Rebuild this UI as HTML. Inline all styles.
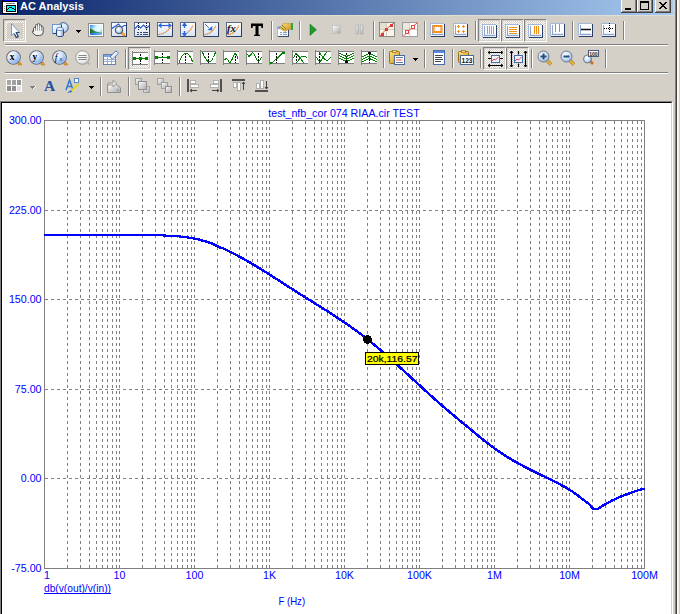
<!DOCTYPE html><html><head><meta charset="utf-8"><style>
*{margin:0;padding:0;box-sizing:border-box}
html,body{width:680px;height:614px;overflow:hidden;background:#d4d0c8;font-family:"Liberation Sans",sans-serif;position:relative}
.a{position:absolute}
.pb{position:absolute;width:23px;height:23px;border-top:1px solid #808080;border-left:1px solid #808080;border-right:1px solid #fff;border-bottom:1px solid #fff;background:#d4d0c8}
.dz{position:absolute;width:19px;height:19px;background:repeating-conic-gradient(#fff 0 25%,#d4d0c8 0 50%) 0 0/2px 2px}
.vs{position:absolute;width:2px;height:19px;border-left:1px solid #808080;border-right:1px solid #fff}
.hs{position:absolute;left:5px;width:663px;height:2px;border-top:1px solid #808080;border-bottom:1px solid #fff}
svg{position:absolute;overflow:visible}
</style></head><body><div class="a" style="left:0;top:0;width:673px;height:15px;background:linear-gradient(to right,#0a246a,#a6caf0)"></div>
<div class="a" style="left:0;top:15px;width:673px;height:1px;background:#e2ded4"></div>
<svg style="left:2px;top:0" width="16" height="14" viewBox="0 0 16 14" shape-rendering="crispEdges">
<rect x="0" y="0" width="16" height="14" fill="#000"/>
<rect x="1" y="0" width="14" height="1" fill="#0000ff"/>
<rect x="1" y="2" width="14" height="11" fill="#fff"/>
<rect x="4" y="3" width="9" height="1" fill="#808080"/>
<rect x="2" y="6" width="1" height="1" fill="#909090"/><rect x="2" y="8" width="1" height="1" fill="#909090"/><rect x="2" y="10" width="1" height="1" fill="#909090"/>
<rect x="4" y="5" width="10" height="7" fill="#000"/>
<rect x="5" y="6" width="8" height="5" fill="#00ffff"/>
<path d="M7 7h3v1h-3zM6 8h1v1h-1zM10 8h2v1h-2zM5 9h1v1h-1zM12 9h1v1h-1z" fill="#000"/>
</svg>
<div class="a" style="left:20px;top:-1px;font:bold 11px 'Liberation Sans',sans-serif;color:#fff;line-height:14px;white-space:nowrap">AC Analysis</div>
<svg style="left:621px;top:-2px" width="16" height="15" viewBox="0 0 16 15" shape-rendering="crispEdges">
<rect x="0" y="0" width="16" height="15" fill="#404040"/>
<rect x="0" y="0" width="15" height="14" fill="#fff"/>
<rect x="1" y="1" width="14" height="13" fill="#808080"/>
<rect x="1" y="1" width="13" height="12" fill="#d4d0c8"/>
<rect x="4" y="10" width="6" height="2" fill="#000"/></svg>
<svg style="left:637px;top:-2px" width="16" height="15" viewBox="0 0 16 15" shape-rendering="crispEdges">
<rect x="0" y="0" width="16" height="15" fill="#404040"/>
<rect x="0" y="0" width="15" height="14" fill="#fff"/>
<rect x="1" y="1" width="14" height="13" fill="#808080"/>
<rect x="1" y="1" width="13" height="12" fill="#d4d0c8"/>
<rect x="3" y="3" width="9" height="9" fill="#000"/><rect x="4" y="5" width="7" height="6" fill="#d4d0c8"/></svg>
<svg style="left:655px;top:-2px" width="16" height="15" viewBox="0 0 16 15" shape-rendering="crispEdges">
<rect x="0" y="0" width="16" height="15" fill="#404040"/>
<rect x="0" y="0" width="15" height="14" fill="#fff"/>
<rect x="1" y="1" width="14" height="13" fill="#808080"/>
<rect x="1" y="1" width="13" height="12" fill="#d4d0c8"/>
<path d="M4 4h2v1h1v1h2v-1h1v-1h2v1h-1v1h-1v1h-1v1h1v1h1v1h1v1h-2v-1h-1v-1h-2v1h-1v1h-2v-1h1v-1h1v-1h1v-1h-1v-1h-1v-1h-1z" fill="#000"/></svg>
<div class="a" style="left:673px;top:0;width:1px;height:614px;background:#d4d0c8"></div>
<div class="a" style="left:674px;top:0;width:1px;height:614px;background:#d4d0c8"></div>
<div class="a" style="left:675px;top:0;width:1px;height:614px;background:#808080"></div>
<div class="a" style="left:676px;top:0;width:1px;height:614px;background:#404040"></div>
<div class="a" style="left:677px;top:0;width:1px;height:614px;background:#fff"></div>
<div class="a" style="left:678px;top:0;width:1px;height:614px;background:#f4f2ee"></div>
<div class="a" style="left:679px;top:0;width:1px;height:614px;background:#d4d0c8"></div>
<div class="hs" style="top:44px"></div>
<div class="hs" style="top:72px"></div>
<svg style="left:0;top:0" width="0" height="0"><defs><linearGradient id="gb" x1="0" y1="0" x2="0" y2="1"><stop offset="0" stop-color="#fff"/><stop offset="1" stop-color="#d6e2f4"/></linearGradient><radialGradient id="mg" cx="0.4" cy="0.35" r="0.7"><stop offset="0" stop-color="#ffffff"/><stop offset="0.6" stop-color="#c9dcf6"/><stop offset="1" stop-color="#7ea6e0"/></radialGradient><linearGradient id="sky" x1="0" y1="0" x2="1" y2="0.6"><stop offset="0" stop-color="#2a7ee4"/><stop offset="0.45" stop-color="#d8f6ff"/><stop offset="0.8" stop-color="#e8fcff"/><stop offset="1" stop-color="#8cd8f0"/></linearGradient><linearGradient id="hill" x1="0" y1="0" x2="1" y2="0"><stop offset="0" stop-color="#1f6a2a"/><stop offset="0.6" stop-color="#4a9a70"/><stop offset="1" stop-color="#58b0b0"/></linearGradient><linearGradient id="wat" x1="0" y1="0" x2="1" y2="0"><stop offset="0" stop-color="#1a70d8"/><stop offset="1" stop-color="#6ac0f0"/></linearGradient><linearGradient id="lb" x1="0" y1="0" x2="1" y2="1"><stop offset="0" stop-color="#ffffff"/><stop offset="0.5" stop-color="#dfeafc"/><stop offset="1" stop-color="#a9c4ec"/></linearGradient><linearGradient id="cy" x1="0" y1="0" x2="1" y2="0"><stop offset="0" stop-color="#c8d8f4"/><stop offset="0.4" stop-color="#ffffff"/><stop offset="1" stop-color="#7f9fd0"/></linearGradient><linearGradient id="gr" x1="0" y1="0" x2="1" y2="1"><stop offset="0" stop-color="#ffffff"/><stop offset="1" stop-color="#a8a8a8"/></linearGradient><radialGradient id="cg" cx="0.35" cy="0.3" r="0.75"><stop offset="0" stop-color="#ffffff"/><stop offset="0.45" stop-color="#cfe2fa"/><stop offset="0.85" stop-color="#7eaaf0"/><stop offset="1" stop-color="#3a6ad0"/></radialGradient><radialGradient id="gg" cx="0.35" cy="0.3" r="0.75"><stop offset="0" stop-color="#ffffff"/><stop offset="0.7" stop-color="#ececec"/><stop offset="1" stop-color="#c8c8c8"/></radialGradient><linearGradient id="gold" x1="0" y1="0" x2="1" y2="1"><stop offset="0" stop-color="#ffe68a"/><stop offset="1" stop-color="#c89010"/></linearGradient></defs></svg>
<div class="pb" style="left:3px;top:19px"></div><div class="dz" style="left:5px;top:21px"></div>
<svg style="left:7px;top:23px" width="16" height="16" viewBox="0 0 16 16"><rect x="0" y="0" width="16" height="16" fill="#d4d0c8"/><path d="M4.5 0.5V12.5L7 10.2L9.3 14.6L11.2 13.8L9.3 9.5H12.5Z" fill="#f8fbff" stroke="#7f9cc8" stroke-width="1" stroke-linejoin="miter"/><path d="M12.5 9.5H9.3L11.2 13.8L9.3 14.6L7.5 11" stroke="#2a4474" stroke-width="1.1" fill="none"/></svg>
<svg style="left:29px;top:22px" width="16" height="16" viewBox="0 0 16 16"><path d="M4.5 9.5V6.5Q4.5 5.5 5.5 5.5Q6.5 5.5 6.5 6.5V3.5Q6.5 2.5 7.5 2.5Q8.5 2.5 8.5 3.5V2.5Q8.5 1.5 9.5 1.5Q10.5 1.5 10.5 2.5V3.5Q10.5 2.8 11.5 2.8Q12.5 2.8 12.5 3.8V5Q12.5 4.5 13.3 4.5Q14.2 4.5 14.2 5.5V10Q14.2 13.5 10.5 13.5H8Q5.5 13.5 4 11Q3 9.5 3.5 9Q4 8.5 4.5 9.5Z" fill="#f2f2f0" stroke="#505050" stroke-width="1"/><path d="M6.5 6.5V9M8.5 3.5V8.5M10.5 3.5V8.5M12.5 5V9" stroke="#909090" stroke-width="0.8"/></svg>
<svg style="left:52px;top:22px" width="16" height="16" viewBox="0 0 16 16"><circle cx="11.3" cy="5.6" r="4.9" fill="url(#lb)" stroke="#2e5590" stroke-width="1"/><rect x="0.5" y="2.5" width="9" height="9" fill="url(#lb)" stroke="#6f96cc" stroke-width="1"/><path d="M1 11.5H9.5V3" stroke="#203e70" fill="none"/><path d="M4.5 7V13.5Q4.5 14.5 8 14.5Q11.5 14.5 11.5 13.5V7" fill="url(#cy)" stroke="#2a4a80" stroke-width="1"/><ellipse cx="8" cy="7" rx="3.5" ry="1.6" fill="#eef4ff" stroke="#5a82c0" stroke-width="0.9"/></svg>
<svg style="left:76px;top:30px" width="5" height="3" viewBox="0 0 5 3" shape-rendering="crispEdges"><path d="M0 0h5v1h-1v1h-1v1h-1v-1h-1v-1h-1z" fill="#000"/></svg>
<svg style="left:88px;top:22px" width="16" height="16" viewBox="0 0 16 16"><rect x="0.5" y="1.5" width="15" height="13" rx="1" fill="#fff" stroke="#8c8c8c" shape-rendering="crispEdges"/><rect x="2" y="3" width="12" height="10" fill="url(#sky)" shape-rendering="crispEdges"/><path d="M2 6.5Q5 7.5 8 9.5Q11 10 14 10.5V13H2Z" fill="url(#hill)"/><rect x="2" y="11" width="12" height="2" fill="url(#wat)" shape-rendering="crispEdges"/></svg>
<svg style="left:111px;top:22px" width="16" height="16" viewBox="0 0 16 16"><rect x="0.5" y="0.5" width="15" height="14" fill="url(#gb)" stroke="#5c6a88" shape-rendering="crispEdges"/><path d="M15.5 1V14.5H1" stroke="#2c3e66" fill="none" shape-rendering="crispEdges"/><path d="M1 6.5L7.5 2L10.5 5.5L13 3.5H15" stroke="#1f55d8" stroke-width="1.1" fill="none"/><path d="M10.5 10.5L13.8 13.8" stroke="#d88010" stroke-width="2.6"/><path d="M10.5 10.5L13.5 13.5" stroke="#f8b040" stroke-width="1.2"/><circle cx="8" cy="8" r="3.6" fill="url(#mg)" stroke="#5c6474" stroke-width="1.3"/></svg>
<svg style="left:134px;top:22px" width="16" height="16" viewBox="0 0 16 16"><rect x="0.5" y="0.5" width="15" height="14" fill="url(#gb)" stroke="#5c6a88" shape-rendering="crispEdges"/><path d="M15.5 1V14.5H1" stroke="#2c3e66" fill="none" shape-rendering="crispEdges"/><path d="M1 6.5L4 3.5L6.5 6L9.5 3L12.5 6L15 4" stroke="#1f55d8" stroke-width="1.1" fill="none"/><path d="M4.5 1V9M12.5 1V9" stroke="#000" stroke-dasharray="1 1" shape-rendering="crispEdges"/><path d="M3 10.5H5M6 10.5H8M9 10.5H14M3 12.5H5M6 12.5H8M9 12.5H14" stroke="#3a4a6a" shape-rendering="crispEdges"/></svg>
<svg style="left:157px;top:22px" width="16" height="16" viewBox="0 0 16 16"><rect x="0.5" y="0.5" width="15" height="14" fill="url(#gb)" stroke="#5c6a88" shape-rendering="crispEdges"/><path d="M15.5 1V14.5H1" stroke="#2c3e66" fill="none" shape-rendering="crispEdges"/><path d="M2 3.5H14" stroke="#2a66d8" stroke-width="1.2" fill="none"/><path d="M1 3.5L4.5 0.8V6.2Z M15 3.5L11.5 0.8V6.2Z" fill="#2a66d8"/><path d="M1.5 12.5Q9 12 14 4.5" stroke="#f07c10" stroke-width="1.1" fill="none" stroke-dasharray="1.6 0.5"/></svg>
<svg style="left:180px;top:22px" width="16" height="16" viewBox="0 0 16 16"><rect x="0.5" y="0.5" width="15" height="14" fill="url(#gb)" stroke="#5c6a88" shape-rendering="crispEdges"/><path d="M15.5 1V14.5H1" stroke="#2c3e66" fill="none" shape-rendering="crispEdges"/><path d="M4.5 2V6M4.5 9V13" stroke="#2a66d8" stroke-width="1.4" fill="none"/><path d="M4.5 0L1.8 4H7.2Z M4.5 15L1.8 11H7.2Z" fill="#2a66d8"/><path d="M7 10.5Q11 8.5 12.8 3.5" stroke="#f07c10" stroke-width="1.1" fill="none" stroke-dasharray="1.6 0.5"/></svg>
<svg style="left:203px;top:22px" width="16" height="16" viewBox="0 0 16 16"><rect x="0.5" y="0.5" width="15" height="14" fill="url(#gb)" stroke="#5c6a88" shape-rendering="crispEdges"/><path d="M15.5 1V14.5H1" stroke="#2c3e66" fill="none" shape-rendering="crispEdges"/><path d="M2 2L6 6" stroke="#1a3a80" stroke-width="1" stroke-dasharray="1 0.6"/><path d="M9.5 4L9 8.5L4.5 8Z" fill="#2a66d8"/><path d="M1.5 12.5Q9 12 13 3.5" stroke="#f07c10" stroke-width="1.1" fill="none" stroke-dasharray="1.6 0.5"/></svg>
<svg style="left:226px;top:22px" width="16" height="16" viewBox="0 0 16 16"><rect x="0.5" y="0.5" width="15" height="14" fill="url(#gb)" stroke="#5c6a88" shape-rendering="crispEdges"/><path d="M15.5 1V14.5H1" stroke="#2c3e66" fill="none" shape-rendering="crispEdges"/><path d="M1.5 12.5Q9 12 13 3.5" stroke="#f07c10" stroke-width="1.1" fill="none" stroke-dasharray="1.6 0.5"/><text x="1" y="10" font-family="Liberation Serif" font-style="italic" font-weight="bold" font-size="10.5" fill="#111">fx</text></svg>
<svg style="left:249px;top:22px" width="16" height="16" viewBox="0 0 16 16"><path d="M2 1.5H14V6H12.5L12 4H9.5V12.5L11 13V14H5V13L6.5 12.5V4H4L3.5 6H2Z" fill="#000"/></svg>
<div class="vs" style="left:271px;top:21px"></div>
<svg style="left:277px;top:22px" width="16" height="16" viewBox="0 0 16 16"><rect x="0.5" y="4.5" width="11" height="10" fill="#f8fbff" stroke="#a8b8d8" shape-rendering="crispEdges"/><path d="M1 14.5H11.5V5" stroke="#3a4a6a" fill="none" shape-rendering="crispEdges"/><rect x="1" y="5" width="4" height="2" fill="#6a9ae4" shape-rendering="crispEdges"/><path d="M3 10.5H5M6 10.5H10M3 12.5H5M6 12.5H10" stroke="#8a9cc0" shape-rendering="crispEdges"/><path d="M2.5 6.5L6.5 1.5Q9 1 13.5 1.5L14 7Q11 7.5 9.5 8.5L8.5 9.5Z" fill="url(#gold)" stroke="#b08a20" stroke-width="0.5"/><path d="M4 6L5 5M5 7L6 6M6 8L7 7M5 4L6 3M6 5L7 4M7 6L8 5M8 7L9 6" stroke="#6a5a20" stroke-width="0.7"/><rect x="14" y="1" width="2" height="7" fill="#2aa84a"/></svg>
<div class="vs" style="left:299px;top:21px"></div>
<svg style="left:305px;top:22px" width="16" height="16" viewBox="0 0 16 16"><path d="M5 2V13.5L11.5 7.8Z" fill="#1f9a2a" stroke="#157020" stroke-width="0.5"/></svg>
<svg style="left:328px;top:22px" width="16" height="16" viewBox="0 0 16 16"><rect x="4.5" y="3.5" width="8" height="8" fill="url(#gr)" stroke="#b8b8b8" stroke-width="0.6"/></svg>
<svg style="left:351px;top:22px" width="16" height="16" viewBox="0 0 16 16"><rect x="5" y="3" width="2.5" height="9" fill="url(#gr)" stroke="#a0a0a0" stroke-width="0.5"/><rect x="9.5" y="3" width="2.5" height="9" fill="url(#gr)" stroke="#a0a0a0" stroke-width="0.5"/></svg>
<div class="vs" style="left:373px;top:21px"></div>
<svg style="left:379px;top:22px" width="16" height="16" viewBox="0 0 16 16"><rect x="0.5" y="0.5" width="15" height="14" fill="#f8f6ec" stroke="#8a8a8a" shape-rendering="crispEdges"/><path d="M7.5 1V14M1 7.5H15" stroke="#d0ccb8" shape-rendering="crispEdges"/><rect x="1" y="1" width="6" height="6" fill="#e4e0cc"/><path d="M1 14L5 9.5L9 5.5L15 1" stroke="#e04848" stroke-width="1" fill="none"/><rect x="2" y="11" width="3" height="3" fill="#e03838"/><rect x="6" y="6" width="3" height="3" fill="#e03838"/><rect x="11" y="2" width="3" height="3" fill="#e03838"/></svg>
<svg style="left:402px;top:22px" width="16" height="16" viewBox="0 0 16 16"><rect x="0.5" y="0.5" width="15" height="14" fill="#fff" stroke="#a0a0a0" shape-rendering="crispEdges"/><path d="M7.5 1V14M1 7.5H15" stroke="#d8d4c0" shape-rendering="crispEdges"/><rect x="1" y="1" width="6" height="6" fill="#ece8d8"/><path d="M1.5 14L4 11.5M6.5 9L9.5 6M12 3.5L15 1" stroke="#e04848" stroke-width="1" fill="none"/><rect x="3.5" y="8.5" width="3" height="3" fill="#fff" stroke="#e04848"/><rect x="9.5" y="3.5" width="3" height="3" fill="#fff" stroke="#e04848"/></svg>
<div class="vs" style="left:424px;top:21px"></div>
<svg style="left:430px;top:22px" width="16" height="16" viewBox="0 0 16 16"><g shape-rendering="crispEdges"><rect x="1" y="2" width="14" height="13" fill="#2c3f68"/><rect x="0" y="1" width="14" height="13" fill="#a6b8d8"/><rect x="1" y="2" width="13" height="12" fill="#fdfeff"/><rect x="1" y="11" width="13" height="3" fill="#e6edf8"/><path d="M2.5 3V12.5H13" stroke="#8ea3c8" fill="none"/></g><rect x="3.5" y="4" width="8" height="6" fill="#fbf4ff" stroke="#f38a10" stroke-width="2"/><rect x="3.5" y="4" width="8" height="6" fill="none" stroke="#fff" stroke-width="0.6" stroke-dasharray="0.6 1.4" stroke-dashoffset="0.3"/></svg>
<svg style="left:453px;top:22px" width="16" height="16" viewBox="0 0 16 16"><g shape-rendering="crispEdges"><rect x="1" y="2" width="14" height="13" fill="#2c3f68"/><rect x="0" y="1" width="14" height="13" fill="#a6b8d8"/><rect x="1" y="2" width="13" height="12" fill="#fdfeff"/><rect x="1" y="11" width="13" height="3" fill="#e6edf8"/><path d="M2.5 3V12.5H13" stroke="#8ea3c8" fill="none"/></g><path d="M5.5 3V6M4 4.5H7M10.5 3V6M9 4.5H12M5.5 8V11M4 9.5H7M10.5 8V11M9 9.5H12" stroke="#f39018" stroke-width="1" shape-rendering="crispEdges"/></svg>
<div class="vs" style="left:475px;top:21px"></div>
<div class="pb" style="left:478px;top:19px"></div><div class="dz" style="left:480px;top:21px"></div>
<svg style="left:482px;top:23px" width="16" height="16" viewBox="0 0 16 16"><g shape-rendering="crispEdges"><rect x="1" y="2" width="14" height="13" fill="#2c3f68"/><rect x="0" y="1" width="14" height="13" fill="#a6b8d8"/><rect x="1" y="2" width="13" height="12" fill="#fdfeff"/><rect x="1" y="11" width="13" height="3" fill="#e6edf8"/><path d="M2.5 3V12.5H13" stroke="#8ea3c8" fill="none"/></g><path d="M5.5 3V11M7.5 3V11M9.5 3V11M11.5 3V11" stroke="#f39018" stroke-width="1" shape-rendering="crispEdges"/></svg>
<div class="pb" style="left:501px;top:19px"></div><div class="dz" style="left:503px;top:21px"></div>
<svg style="left:505px;top:23px" width="16" height="16" viewBox="0 0 16 16"><g shape-rendering="crispEdges"><rect x="1" y="2" width="14" height="13" fill="#2c3f68"/><rect x="0" y="1" width="14" height="13" fill="#a6b8d8"/><rect x="1" y="2" width="13" height="12" fill="#fdfeff"/><rect x="1" y="11" width="13" height="3" fill="#e6edf8"/><path d="M2.5 3V12.5H13" stroke="#8ea3c8" fill="none"/></g><path d="M4 4.5H12M4 6.5H12M4 8.5H12M4 10.5H12" stroke="#f39018" stroke-width="1" shape-rendering="crispEdges"/></svg>
<div class="pb" style="left:524px;top:19px"></div><div class="dz" style="left:526px;top:21px"></div>
<svg style="left:528px;top:23px" width="16" height="16" viewBox="0 0 16 16"><g shape-rendering="crispEdges"><rect x="1" y="2" width="14" height="13" fill="#2c3f68"/><rect x="0" y="1" width="14" height="13" fill="#a6b8d8"/><rect x="1" y="2" width="13" height="12" fill="#fdfeff"/><rect x="1" y="11" width="13" height="3" fill="#e6edf8"/><path d="M2.5 3V12.5H13" stroke="#8ea3c8" fill="none"/></g><path d="M6.5 3V11M8.5 3V11M10.5 3V11" stroke="#f39018" stroke-width="1" shape-rendering="crispEdges"/></svg>
<svg style="left:550px;top:22px" width="16" height="16" viewBox="0 0 16 16"><g shape-rendering="crispEdges"><rect x="1" y="2" width="14" height="13" fill="#2c3f68"/><rect x="0" y="1" width="14" height="13" fill="#a6b8d8"/><rect x="1" y="2" width="13" height="12" fill="#fdfeff"/><rect x="1" y="11" width="13" height="3" fill="#e6edf8"/><path d="M2.5 3V12.5H13" stroke="#8ea3c8" fill="none"/></g><path d="M5.5 2V10M9.5 2V10" stroke="#f08010" stroke-width="1.1" shape-rendering="crispEdges"/></svg>
<div class="vs" style="left:572px;top:21px"></div>
<svg style="left:578px;top:22px" width="16" height="16" viewBox="0 0 16 16"><g shape-rendering="crispEdges"><rect x="1" y="2" width="14" height="13" fill="#2c3f68"/><rect x="0" y="1" width="14" height="13" fill="#a6b8d8"/><rect x="1" y="2" width="13" height="12" fill="#fdfeff"/><rect x="1" y="11" width="13" height="3" fill="#e6edf8"/><path d="M2.5 3V12.5H13" stroke="#8ea3c8" fill="none"/></g><path d="M3 7.5H13" stroke="#101010" stroke-width="1.5"/></svg>
<svg style="left:601px;top:22px" width="16" height="16" viewBox="0 0 16 16"><g shape-rendering="crispEdges"><rect x="1" y="2" width="14" height="13" fill="#2c3f68"/><rect x="0" y="1" width="14" height="13" fill="#a6b8d8"/><rect x="1" y="2" width="13" height="12" fill="#fdfeff"/><rect x="1" y="11" width="13" height="3" fill="#e6edf8"/><path d="M2.5 3V12.5H13" stroke="#8ea3c8" fill="none"/></g><path d="M8.5 1V10M3 6.5H13" stroke="#000" stroke-dasharray="1 1" shape-rendering="crispEdges"/></svg>
<div class="vs" style="left:623px;top:21px"></div>
<svg style="left:6px;top:50px" width="16" height="16" viewBox="0 0 16 16"><circle cx="7.5" cy="7.5" r="6.8" fill="url(#cg)" stroke="#6a6e78" stroke-width="1.1"/><circle cx="7.5" cy="7.5" r="5.8" fill="none" stroke="#f4f8ff" stroke-width="0.7" stroke-opacity="0.8"/><text x="3.8" y="10" font-family="Liberation Serif" font-weight="bold" font-size="9.5" fill="#000">x</text><path d="M12 15L13 12.5H14.5L15.8 15Z" fill="#f0a020" stroke="#b06a10" stroke-width="0.5"/></svg>
<svg style="left:29px;top:50px" width="16" height="16" viewBox="0 0 16 16"><circle cx="7.5" cy="7.5" r="6.8" fill="url(#cg)" stroke="#6a6e78" stroke-width="1.1"/><circle cx="7.5" cy="7.5" r="5.8" fill="none" stroke="#f4f8ff" stroke-width="0.7" stroke-opacity="0.8"/><text x="3.6" y="10" font-family="Liberation Serif" font-weight="bold" font-size="9.5" fill="#000">y</text><path d="M12 15L13 12.5H14.5L15.8 15Z" fill="#f0a020" stroke="#b06a10" stroke-width="0.5"/></svg>
<svg style="left:52px;top:50px" width="16" height="16" viewBox="0 0 16 16"><circle cx="7.5" cy="7.5" r="6.8" fill="url(#cg)" stroke="#6a6e78" stroke-width="1.1"/><circle cx="7.5" cy="7.5" r="5.8" fill="none" stroke="#f4f8ff" stroke-width="0.7" stroke-opacity="0.8"/><text x="2.8" y="10.5" font-family="Liberation Serif" font-style="italic" font-size="9.5" fill="#000">f</text><text x="7.5" y="10.5" font-family="Liberation Sans" font-size="5.5" fill="#222">x</text><path d="M12 15L13 12.5H14.5L15.8 15Z" fill="#f0a020" stroke="#b06a10" stroke-width="0.5"/></svg>
<svg style="left:75px;top:50px" width="16" height="16" viewBox="0 0 16 16"><circle cx="7.5" cy="7.5" r="6.8" fill="url(#gg)" stroke="#9a9a9a" stroke-width="1"/><path d="M3.5 5.5H11.5M3 7.5H12M3.5 9.5H11.5" stroke="#6a6a6a" stroke-width="0.8"/><path d="M12.5 12.5L14.5 14.5" stroke="#a8a8a8" stroke-width="1.5"/></svg>
<div class="vs" style="left:97px;top:49px"></div>
<svg style="left:103px;top:50px" width="16" height="16" viewBox="0 0 16 16"><rect x="0.5" y="4.5" width="12" height="10" fill="#fff" stroke="#6a7ea8" shape-rendering="crispEdges"/><rect x="1" y="5" width="11" height="2" fill="#7aa4e8" shape-rendering="crispEdges"/><path d="M1 9.5H12M1 11.5H12M4.5 7V14M8.5 7V14" stroke="#9ab0d8" shape-rendering="crispEdges"/><path d="M7 7L12 1.5Q13 0.8 14 1.5L15 2.5Q15.5 3.5 14.5 4.5L9.5 9Z" fill="#e8f0fb" stroke="#4a6aa8" stroke-width="0.9"/></svg>
<div class="vs" style="left:125px;top:49px"></div>
<div class="pb" style="left:128px;top:47px"></div><div class="dz" style="left:130px;top:49px"></div>
<svg style="left:132px;top:51px" width="16" height="16" viewBox="0 0 16 16"><rect x="1" y="2" width="15" height="11" fill="#fff" shape-rendering="crispEdges"/><path d="M0.5 0V15M1 1.5H16M1 13.5H16" stroke="#808080" fill="none" shape-rendering="crispEdges"/><path d="M8.5 3V13" stroke="#000" stroke-dasharray="2 1" fill="none" shape-rendering="crispEdges"/><g shape-rendering="crispEdges" fill="#008000"><rect x="1" y="7" width="15" height="1"/><rect x="1" y="6" width="3" height="3"/><rect x="7" y="6" width="3" height="3"/><rect x="13" y="6" width="3" height="3"/></g></svg>
<svg style="left:154px;top:50px" width="16" height="16" viewBox="0 0 16 16"><rect x="1" y="2" width="15" height="11" fill="#fff" shape-rendering="crispEdges"/><path d="M0.5 0V15M1 1.5H16M1 13.5H16" stroke="#808080" fill="none" shape-rendering="crispEdges"/><path d="M8.5 3V13" stroke="#000" stroke-dasharray="2 1" fill="none" shape-rendering="crispEdges"/><g shape-rendering="crispEdges" fill="#008000"><rect x="1" y="7" width="15" height="1"/><rect x="1" y="6" width="3" height="3"/><rect x="13" y="6" width="3" height="3"/></g></svg>
<svg style="left:177px;top:50px" width="16" height="16" viewBox="0 0 16 16"><rect x="1" y="2" width="15" height="11" fill="#fff" shape-rendering="crispEdges"/><path d="M0.5 0V15M1 1.5H16M1 13.5H16" stroke="#808080" fill="none" shape-rendering="crispEdges"/><path d="M8.5 3V13" stroke="#000" stroke-dasharray="2 1" fill="none" shape-rendering="crispEdges"/><path d="M2.5 13V11L3.5 9L4.5 7L6 5L7.5 3.5H10.5L12 5L13.5 7L14.5 9L15.5 12" stroke="#008000" stroke-width="1.0" fill="none" shape-rendering="crispEdges"/></svg>
<svg style="left:200px;top:50px" width="16" height="16" viewBox="0 0 16 16"><rect x="1" y="2" width="15" height="11" fill="#fff" shape-rendering="crispEdges"/><path d="M0.5 0V15M1 1.5H16M1 13.5H16" stroke="#808080" fill="none" shape-rendering="crispEdges"/><path d="M8.5 3V13" stroke="#000" stroke-dasharray="2 1" fill="none" shape-rendering="crispEdges"/><path d="M2.5 2L3.5 5L5 7.5L6.5 10L8 11.5H10.5L12 10L13.5 7.5L14.5 5L15.5 2" stroke="#008000" stroke-width="1.0" fill="none" shape-rendering="crispEdges"/></svg>
<svg style="left:223px;top:50px" width="16" height="16" viewBox="0 0 16 16"><rect x="1" y="2" width="15" height="11" fill="#fff" shape-rendering="crispEdges"/><path d="M0.5 0V15M1 1.5H16M1 13.5H16" stroke="#808080" fill="none" shape-rendering="crispEdges"/><path d="M12.5 3V13" stroke="#000" stroke-dasharray="2 1" fill="none" shape-rendering="crispEdges"/><path d="M1.5 10L3 8.5L4.5 9.5L6 12L7.5 12L9 9.5L10.5 5.5L12 3.5L13.5 5L15 8.5" stroke="#008000" stroke-width="1.0" fill="none" shape-rendering="crispEdges"/></svg>
<svg style="left:246px;top:50px" width="16" height="16" viewBox="0 0 16 16"><rect x="1" y="2" width="15" height="11" fill="#fff" shape-rendering="crispEdges"/><path d="M0.5 0V15M1 1.5H16M1 13.5H16" stroke="#808080" fill="none" shape-rendering="crispEdges"/><path d="M12.5 3V13" stroke="#000" stroke-dasharray="2 1" fill="none" shape-rendering="crispEdges"/><path d="M1.5 4.5L3 6.5L4.5 5L6.5 2.5L8 4L9.5 7L11 10L12.5 11.5L14 10L15.5 7" stroke="#008000" stroke-width="1.0" fill="none" shape-rendering="crispEdges"/></svg>
<svg style="left:269px;top:50px" width="16" height="16" viewBox="0 0 16 16"><rect x="1" y="2" width="15" height="11" fill="#fff" shape-rendering="crispEdges"/><path d="M0.5 0V15M1 1.5H16M1 13.5H16" stroke="#808080" fill="none" shape-rendering="crispEdges"/><path d="M7.5 3V13" stroke="#000" stroke-dasharray="2 1" fill="none" shape-rendering="crispEdges"/><path d="M1 13H3L13.5 3H16" stroke="#008000" stroke-width="1.1" fill="none" shape-rendering="crispEdges"/></svg>
<svg style="left:292px;top:50px" width="16" height="16" viewBox="0 0 16 16"><rect x="1" y="2" width="15" height="11" fill="#fff" shape-rendering="crispEdges"/><path d="M0.5 0V15M1 1.5H16M1 13.5H16" stroke="#808080" fill="none" shape-rendering="crispEdges"/><path d="M4.5 3V13" stroke="#000" stroke-dasharray="2 1" fill="none" shape-rendering="crispEdges"/><path d="M1.5 8L4 3L6.5 6L9 9L11.5 13M4.5 13L7 9.5L9 7L11.5 6H13L15.5 8.5" stroke="#008000" stroke-width="1.0" fill="none" shape-rendering="crispEdges"/></svg>
<svg style="left:315px;top:50px" width="16" height="16" viewBox="0 0 16 16"><rect x="1" y="2" width="15" height="11" fill="#fff" shape-rendering="crispEdges"/><path d="M0.5 0V15M1 1.5H16M1 13.5H16" stroke="#808080" fill="none" shape-rendering="crispEdges"/><path d="M4.5 3V13" stroke="#000" stroke-dasharray="2 1" fill="none" shape-rendering="crispEdges"/><path d="M1.5 7.5L3 10L5 12L7 9L9.5 5L12 2M4 2L6.5 5.5L9 8.5L11 10L13 10L15.5 7.5" stroke="#008000" stroke-width="1.0" fill="none" shape-rendering="crispEdges"/></svg>
<svg style="left:338px;top:50px" width="16" height="16" viewBox="0 0 16 16"><rect x="1" y="2" width="15" height="11" fill="#fff" shape-rendering="crispEdges"/><path d="M0.5 0V15M1 1.5H16M1 13.5H16" stroke="#808080" fill="none" shape-rendering="crispEdges"/><path d="M8.5 3V13" stroke="#000" stroke-dasharray="2 1" fill="none" shape-rendering="crispEdges"/><path d="M1 3L8.5 6.5L16 3M1 5.5L8.5 9L16 5.5M1 8L8.5 11.5L16 8" stroke="#008000" stroke-width="1.0" fill="none" shape-rendering="crispEdges"/><rect x="7" y="11" width="3" height="2" fill="#000" shape-rendering="crispEdges"/></svg>
<svg style="left:361px;top:50px" width="16" height="16" viewBox="0 0 16 16"><rect x="1" y="2" width="15" height="11" fill="#fff" shape-rendering="crispEdges"/><path d="M0.5 0V15M1 1.5H16M1 13.5H16" stroke="#808080" fill="none" shape-rendering="crispEdges"/><path d="M8.5 3V13" stroke="#000" stroke-dasharray="2 1" fill="none" shape-rendering="crispEdges"/><path d="M1 7L8.5 3.5L16 7M1 9.5L8.5 6L16 9.5M1 12L8.5 8.5L16 12" stroke="#008000" stroke-width="1.0" fill="none" shape-rendering="crispEdges"/><rect x="7" y="2" width="3" height="2" fill="#000" shape-rendering="crispEdges"/></svg>
<div class="vs" style="left:383px;top:49px"></div>
<svg style="left:389px;top:50px" width="16" height="16" viewBox="0 0 16 16"><rect x="0.5" y="1.5" width="10" height="12" rx="1" fill="url(#gold)" stroke="#9a7010"/><rect x="3.5" y="0.5" width="4" height="2" fill="#f4e0a0" stroke="#9a7010" stroke-width="0.7"/><rect x="5.5" y="5.5" width="10" height="9" fill="#fff" stroke="#4a6a9a" shape-rendering="crispEdges"/><path d="M7 7.5H14M7 12.5H14" stroke="#5a7ab8" shape-rendering="crispEdges"/><path d="M7 10.5L8 9.5L9 10.5L10 9.5L11 10.5L12 9.5L13 10.5" stroke="#e03020" stroke-width="1" fill="none"/></svg>
<svg style="left:413px;top:58px" width="5" height="3" viewBox="0 0 5 3" shape-rendering="crispEdges"><path d="M0 0h5v1h-1v1h-1v1h-1v-1h-1v-1h-1z" fill="#000"/></svg>
<div class="vs" style="left:424px;top:49px"></div>
<svg style="left:431px;top:50px" width="16" height="16" viewBox="0 0 16 16"><rect x="2.5" y="0.5" width="11" height="14" fill="#fff" stroke="#4a6aa8" shape-rendering="crispEdges"/><rect x="3" y="1" width="10" height="2" fill="#5a8ae0" shape-rendering="crispEdges"/><path d="M4 5.5H12M4 7.5H11M4 9.5H12M4 11.5H10" stroke="#404850" shape-rendering="crispEdges"/></svg>
<div class="vs" style="left:452px;top:49px"></div>
<svg style="left:458px;top:50px" width="16" height="16" viewBox="0 0 16 16"><rect x="0.5" y="1.5" width="10" height="11" rx="1" fill="url(#gold)" stroke="#9a7010"/><rect x="3.5" y="0.5" width="4" height="2" fill="#f4e0a0" stroke="#9a7010" stroke-width="0.7"/><rect x="2.5" y="5.5" width="13" height="9" fill="#fff" stroke="#4a6a9a" shape-rendering="crispEdges"/><text x="3.5" y="13" font-family="Liberation Sans" font-weight="bold" font-size="7.5" fill="#111" textLength="11" lengthAdjust="spacingAndGlyphs">123</text></svg>
<div class="vs" style="left:480px;top:49px"></div>
<div class="pb" style="left:483px;top:47px"></div><div class="dz" style="left:485px;top:49px"></div>
<div class="pb" style="left:506px;top:47px"></div><div class="dz" style="left:508px;top:49px"></div>
<svg style="left:487px;top:51px" width="16" height="16" viewBox="0 0 16 16"><rect x="4.5" y="4.5" width="8" height="7" fill="#eef4ff" stroke="#4a6aa8"/><path d="M5 10L7 8L8.5 9L11.5 6" stroke="#e02020" stroke-width="0.9" fill="none"/><path d="M1 1.5H16M1 14.5H16M1 7.5H4M13 7.5H16" stroke="#000" stroke-width="1.2"/><path d="M1 1.5L3 0M1 1.5L3 3M16 1.5L14 0M16 1.5L14 3M1 14.5L3 13M1 14.5L3 16M16 14.5L14 13M16 14.5L14 16" stroke="#000" stroke-width="1"/></svg>
<svg style="left:510px;top:51px" width="16" height="16" viewBox="0 0 16 16"><rect x="4.5" y="4.5" width="8" height="7" fill="#eef4ff" stroke="#4a6aa8"/><path d="M5 10L7 8L8.5 9L11.5 6" stroke="#e02020" stroke-width="0.9" fill="none"/><path d="M1.5 0V16M15.5 0V16M8.5 0V3.5M8.5 12.5V16" stroke="#000" stroke-width="1.2"/><path d="M0 2L1.5 0L3 2M14 2L15.5 0L17 2M0 14L1.5 16L3 14M14 14L15.5 16L17 14" stroke="#000" stroke-width="1" fill="none"/></svg>
<div class="vs" style="left:531px;top:49px"></div>
<svg style="left:537px;top:50px" width="16" height="16" viewBox="0 0 16 16"><path d="M9.5 10L14 14.5" stroke="#a07810" stroke-width="3.2"/><path d="M9.5 10L14 14.5" stroke="#e8b840" stroke-width="2"/><circle cx="6.5" cy="6.5" r="5.5" fill="url(#mg)" stroke="#707a88"/><path d="M6.5 3.5V9.5M3.5 6.5H9.5" stroke="#2a4a7a" stroke-width="2"/></svg>
<svg style="left:560px;top:50px" width="16" height="16" viewBox="0 0 16 16"><path d="M9.5 10L14 14.5" stroke="#a07810" stroke-width="3.2"/><path d="M9.5 10L14 14.5" stroke="#e8b840" stroke-width="2"/><circle cx="6.5" cy="6.5" r="5.5" fill="url(#mg)" stroke="#707a88"/><path d="M3.5 6.5H9.5" stroke="#2a4a7a" stroke-width="2"/></svg>
<svg style="left:583px;top:50px" width="16" height="16" viewBox="0 0 16 16"><path d="M7 11L10 14" stroke="#d07010" stroke-width="2.6"/><circle cx="4.5" cy="9" r="4" fill="url(#mg)" stroke="#707a88"/><rect x="5.5" y="0.5" width="10" height="6" fill="#fff" stroke="#4a5a7a"/><text x="6.2" y="5.8" font-family="Liberation Sans" font-weight="bold" font-size="5.5" fill="#111" textLength="8.5" lengthAdjust="spacingAndGlyphs">100</text></svg>
<div class="vs" style="left:605px;top:49px"></div>
<svg style="left:6px;top:78px" width="16" height="16" viewBox="0 0 16 16"><rect x="0" y="1" width="16" height="13" fill="#fff" shape-rendering="crispEdges"/><rect x="1" y="2" width="4" height="5" fill="#a8a8a8"/><rect x="6" y="2" width="4" height="5" fill="#a0a0a0"/><rect x="11" y="2" width="4" height="5" fill="#989898"/><rect x="1" y="8" width="4" height="5" fill="#8c8c8c"/><rect x="6" y="8" width="4" height="5" fill="#909090"/><rect x="11" y="8" width="4" height="5" fill="#e0e0e0"/></svg>
<svg style="left:31px;top:86px" width="5" height="3" viewBox="0 0 5 3" shape-rendering="crispEdges"><path d="M0 0h5v1h-1v1h-1v1h-1v-1h-1v-1h-1z" fill="#ffffff"/></svg>
<svg style="left:30px;top:86px" width="5" height="3" viewBox="0 0 5 3" shape-rendering="crispEdges"><path d="M0 0h5v1h-1v1h-1v1h-1v-1h-1v-1h-1z" fill="#808080"/></svg>
<svg style="left:42px;top:78px" width="16" height="16" viewBox="0 0 16 16"><text x="2" y="12.6" font-family="Liberation Serif" font-weight="bold" font-size="15.5" fill="#2a4e9c">A</text></svg>
<svg style="left:64px;top:78px" width="16" height="16" viewBox="0 0 16 16"><path d="M2 12L5.5 2L9 12M3.3 8.5H7.7" stroke="#3a78d0" stroke-width="1.5" fill="none"/><rect x="10.5" y="0.5" width="4" height="4" fill="#fff" stroke="#5a86c8"/><path d="M7 13.5L14.5 6" stroke="#e8d820" stroke-width="2.2"/><path d="M3 15L7 12L8 14Z" fill="#2a66c8"/></svg>
<svg style="left:89px;top:86px" width="5" height="3" viewBox="0 0 5 3" shape-rendering="crispEdges"><path d="M0 0h5v1h-1v1h-1v1h-1v-1h-1v-1h-1z" fill="#000"/></svg>
<div class="vs" style="left:100px;top:77px"></div>
<svg style="left:106px;top:78px" width="16" height="16" viewBox="0 0 16 16"><path d="M1.5 6.5H11L14.5 10V14.5H2Q1.5 14.5 1.5 14Z" fill="url(#gr)" stroke="#909090"/><path d="M2 5H7V2L11 5.5L7 9V7H2Z" fill="#e0e0e0" stroke="#909090" stroke-width="0.8"/><circle cx="11.5" cy="12" r="0.8" fill="#808080"/></svg>
<div class="vs" style="left:128px;top:77px"></div>
<svg style="left:134px;top:78px" width="16" height="16" viewBox="0 0 16 16"><rect x="1.5" y="0.5" width="6" height="6" fill="url(#gr)" stroke="#a0a0a0"/><rect x="9.5" y="8.5" width="6" height="6" fill="url(#gr)" stroke="#a0a0a0"/><rect x="4.5" y="3.5" width="8" height="8" fill="url(#gr)" stroke="#909090"/></svg>
<svg style="left:157px;top:78px" width="16" height="16" viewBox="0 0 16 16"><rect x="0.5" y="0.5" width="6" height="6" fill="url(#gr)" stroke="#a0a0a0"/><rect x="4.5" y="4.5" width="6" height="6" fill="url(#gr)" stroke="#a0a0a0"/><rect x="8.5" y="8.5" width="6" height="6" fill="url(#gr)" stroke="#909090"/></svg>
<div class="vs" style="left:179px;top:77px"></div>
<svg style="left:185px;top:78px" width="16" height="16" viewBox="0 0 16 16"><rect x="2" y="1" width="2" height="13" fill="#505050"/><rect x="5.5" y="2.5" width="5" height="3" fill="#fff" stroke="#b0b0b0"/><rect x="5.5" y="6.5" width="8" height="3" fill="#fff" stroke="#b0b0b0"/><path d="M5 12.5H12M5 12.5L7 11M5 12.5L7 14" stroke="#404040"/></svg>
<svg style="left:208px;top:78px" width="16" height="16" viewBox="0 0 16 16"><rect x="12" y="1" width="2" height="13" fill="#505050"/><rect x="5.5" y="2.5" width="5" height="3" fill="#fff" stroke="#b0b0b0"/><rect x="2.5" y="6.5" width="8" height="3" fill="#fff" stroke="#b0b0b0"/><path d="M4 12.5H11M11 12.5L9 11M11 12.5L9 14" stroke="#404040"/></svg>
<svg style="left:231px;top:78px" width="16" height="16" viewBox="0 0 16 16"><rect x="1" y="1" width="13" height="2" fill="#505050"/><rect x="2.5" y="4.5" width="3" height="5" fill="#fff" stroke="#b0b0b0"/><rect x="6.5" y="4.5" width="3" height="8" fill="#fff" stroke="#b0b0b0"/><path d="M12.5 4V12M12.5 4L11 6M12.5 4L14 6" stroke="#404040"/></svg>
<svg style="left:254px;top:78px" width="16" height="16" viewBox="0 0 16 16"><rect x="1" y="12" width="13" height="2" fill="#505050"/><rect x="2.5" y="5.5" width="3" height="5" fill="#fff" stroke="#b0b0b0"/><rect x="6.5" y="2.5" width="3" height="8" fill="#fff" stroke="#b0b0b0"/><path d="M12.5 3V11M12.5 11L11 9M12.5 11L14 9" stroke="#404040"/></svg>
<div class="a" style="left:0;top:101px;width:673px;height:513px;background:#fff;border-top:1px solid #808080;border-left:1px solid #808080;border-right:1px solid #fff"></div>
<div class="a" style="left:1px;top:102px;width:671px;height:512px;border-top:1px solid #000;border-left:1px solid #000;border-right:1px solid #d4d0c8"></div>
<svg style="left:0;top:0" width="680" height="614" viewBox="0 0 680 614"><path d="M67.5 121V568M80.5 121V568M89.5 121V568M96.5 121V568M102.5 121V568M107.5 121V568M112.5 121V568M116.5 121V568M119.5 121V568M142.5 121V568M155.5 121V568M164.5 121V568M171.5 121V568M177.5 121V568M182.5 121V568M187.5 121V568M191.5 121V568M194.5 121V568M217.5 121V568M230.5 121V568M239.5 121V568M246.5 121V568M252.5 121V568M257.5 121V568M262.5 121V568M266.5 121V568M269.5 121V568M292.5 121V568M305.5 121V568M314.5 121V568M321.5 121V568M327.5 121V568M332.5 121V568M337.5 121V568M341.5 121V568M344.5 121V568M367.5 121V568M380.5 121V568M389.5 121V568M396.5 121V568M402.5 121V568M407.5 121V568M412.5 121V568M416.5 121V568M419.5 121V568M442.5 121V568M455.5 121V568M464.5 121V568M471.5 121V568M477.5 121V568M482.5 121V568M487.5 121V568M491.5 121V568M494.5 121V568M517.5 121V568M530.5 121V568M539.5 121V568M546.5 121V568M552.5 121V568M557.5 121V568M562.5 121V568M566.5 121V568M569.5 121V568M592.5 121V568M605.5 121V568M614.5 121V568M621.5 121V568M627.5 121V568M632.5 121V568M637.5 121V568M641.5 121V568M45 210.5H644M45 299.5H644M45 389.5H644M45 478.5H644" stroke="#808080" stroke-width="1" stroke-dasharray="3 3" fill="none" shape-rendering="crispEdges"/><rect x="44.5" y="120.5" width="600" height="448" stroke="#808080" stroke-width="1" fill="none" shape-rendering="crispEdges"/><polyline points="43.5,234.5 149.5,234.5 164.5,235.0 179.5,236.0 187.5,237.0 193.5,238.0 198.5,239.0 201.5,240.0 205.5,241.0 208.5,242.0 211.5,243.0 213.5,244.0 215.5,245.0 217.5,246.0 219.5,247.0 221.5,247.4 222.5,247.8 223.5,248.3 224.5,248.8 225.5,249.2 226.5,249.7 227.5,250.2 228.5,250.7 229.5,251.2 230.5,251.7 231.5,252.2 232.5,252.7 233.5,253.2 234.5,253.8 235.5,254.3 236.5,254.8 237.5,255.4 238.5,255.9 239.5,256.4 240.5,257.0 241.5,257.5 242.5,258.1 243.5,258.7 244.5,259.2 245.5,259.8 246.5,260.4 247.5,260.9 248.5,261.5 249.5,262.1 250.5,262.7 251.5,263.3 252.5,263.9 253.5,264.5 254.5,265.1 255.5,265.7 256.5,266.3 257.5,266.9 258.5,267.5 259.5,268.1 260.5,268.7 261.5,269.3 262.5,270.0 263.5,270.6 264.5,271.2 265.5,271.8 266.5,272.5 267.5,273.1 268.5,273.7 269.5,274.3 270.5,275.0 271.5,275.6 272.5,276.3 273.5,276.9 274.5,277.5 275.5,278.2 276.5,278.8 277.5,279.4 278.5,280.1 279.5,280.7 280.5,281.4 281.5,282.0 282.5,282.7 283.5,283.3 284.5,283.9 285.5,284.6 286.5,285.2 287.5,285.9 288.5,286.5 289.5,287.2 290.5,287.8 291.5,288.4 292.5,289.1 293.5,289.7 294.5,290.4 295.5,291.0 296.5,291.6 297.5,292.3 298.5,292.9 299.5,293.6 300.5,294.2 301.5,294.8 302.5,295.5 303.5,296.1 304.5,296.7 305.5,297.3 306.5,298.0 307.5,298.6 308.5,299.2 309.5,299.8 310.5,300.5 311.5,301.1 312.5,301.7 313.5,302.3 314.5,302.9 315.5,303.6 316.5,304.2 317.5,304.8 318.5,305.4 319.5,306.1 320.5,306.7 321.5,307.3 322.5,307.9 323.5,308.6 324.5,309.2 325.5,309.8 326.5,310.5 327.5,311.1 328.5,311.7 329.5,312.4 330.5,313.0 331.5,313.7 332.5,314.3 333.5,314.9 334.5,315.6 335.5,316.3 336.5,316.9 337.5,317.6 338.5,318.2 339.5,318.9 340.5,319.6 341.5,320.2 342.5,320.9 343.5,321.6 344.5,322.3 345.5,323.0 346.5,323.7 347.5,324.4 348.5,325.0 349.5,325.8 350.5,326.5 351.5,327.2 352.5,327.9 353.5,328.6 354.5,329.3 355.5,330.1 356.5,330.8 357.5,331.5 358.5,332.3 359.5,333.0 360.5,333.8 361.5,334.5 362.5,335.3 363.5,336.1 364.5,336.9 365.5,337.6 366.5,338.4 367.5,339.2 368.5,340.0 369.5,340.8 370.5,341.6 371.5,342.4 372.5,343.3 373.5,344.1 374.5,344.9 375.5,345.7 376.5,346.6 377.5,347.4 378.5,348.3 379.5,349.1 380.5,350.0 381.5,350.8 382.5,351.7 383.5,352.6 384.5,353.4 385.5,354.3 386.5,355.2 387.5,356.1 388.5,357.0 389.5,357.8 390.5,358.7 391.5,359.6 392.5,360.5 393.5,361.4 394.5,362.3 395.5,363.2 396.5,364.1 397.5,365.0 398.5,365.9 399.5,366.9 400.5,367.8 401.5,368.7 402.5,369.6 403.5,370.5 404.5,371.4 405.5,372.3 406.5,373.3 407.5,374.2 408.5,375.1 409.5,376.0 410.5,376.9 411.5,377.9 412.5,378.8 413.5,379.7 414.5,380.6 415.5,381.5 416.5,382.5 417.5,383.4 418.5,384.3 419.5,385.2 420.5,386.1 421.5,387.1 422.5,388.0 423.5,388.9 424.5,389.8 425.5,390.7 426.5,391.6 427.5,392.5 428.5,393.4 429.5,394.3 430.5,395.3 431.5,396.2 432.5,397.1 433.5,397.9 434.5,398.8 435.5,399.7 436.5,400.6 437.5,401.5 438.5,402.4 439.5,403.3 440.5,404.1 441.5,405.0 442.5,405.9 443.5,406.7 444.5,407.6 445.5,408.5 446.5,409.3 447.5,410.2 448.5,411.0 449.5,411.9 450.5,412.7 451.5,413.5 452.5,414.4 453.5,415.2 454.5,416.1 455.5,416.9 456.5,417.7 457.5,418.5 458.5,419.4 459.5,420.2 460.5,421.0 461.5,421.9 462.5,422.7 463.5,423.5 464.5,424.3 465.5,425.2 466.5,426.0 467.5,426.8 468.5,427.6 469.5,428.4 470.5,429.3 471.5,430.1 472.5,430.9 473.5,431.7 474.5,432.6 475.5,433.4 476.5,434.2 477.5,435.0 478.5,435.8 479.5,436.7 480.5,437.5 481.5,438.3 482.5,439.1 483.5,439.9 484.5,440.7 485.5,441.5 486.5,442.3 487.5,443.0 488.5,443.8 489.5,444.6 490.5,445.3 491.5,446.1 492.5,446.8 493.5,447.6 494.5,448.3 495.5,449.0 496.5,449.7 497.5,450.4 498.5,451.1 499.5,451.8 500.5,452.5 501.5,453.1 502.5,453.8 503.5,454.4 504.5,455.0 505.5,455.7 506.5,456.3 507.5,456.9 508.5,457.5 509.5,458.1 510.5,458.7 511.5,459.3 512.5,459.9 513.5,460.4 514.5,461.0 515.5,461.6 516.5,462.1 517.5,462.7 518.5,463.2 519.5,463.8 520.5,464.3 521.5,464.8 522.5,465.4 523.5,465.9 524.5,466.4 525.5,466.9 526.5,467.4 527.5,467.9 528.5,468.5 529.5,469.0 530.5,469.5 531.5,470.0 532.5,470.5 533.5,471.0 534.5,471.5 535.5,472.0 536.5,472.4 537.5,472.9 538.5,473.4 539.5,473.9 540.5,474.4 541.5,474.9 542.5,475.4 543.5,475.9 544.5,476.3 545.5,476.8 546.5,477.3 547.5,477.8 548.5,478.3 549.5,478.8 550.5,479.3 551.5,479.8 552.5,480.2 553.5,480.7 554.5,481.2 555.5,481.7 556.5,482.2 557.5,482.7 558.5,483.3 559.5,483.8 560.5,484.3 561.5,484.9 562.5,485.4 563.5,486.0 564.5,486.5 565.5,487.1 566.5,487.7 567.5,488.3 568.5,488.9 569.5,489.5 570.5,490.2 571.5,490.8 572.5,491.5 573.5,492.2 574.5,492.9 575.5,493.6 576.5,494.3 577.5,495.1 578.5,495.9 579.5,496.6 580.5,497.4 581.5,498.2 582.5,499.0 583.5,499.8 584.5,500.5 585.5,501.3 586.5,502.0 587.5,502.8 588.5,503.6 589.5,504.6 590.5,505.6 592.0,507.8 593.0,508.5 597.0,508.5 597.5,508.4 598.5,507.7 599.5,507.0 600.5,506.4 601.5,505.7 602.5,505.1 603.5,504.5 604.5,503.9 605.5,503.4 606.5,502.8 607.5,502.2 608.5,501.7 609.5,501.2 610.5,500.6 611.5,500.1 612.5,499.6 613.5,499.2 614.5,498.7 615.5,498.2 616.5,497.8 617.5,497.3 618.5,496.9 619.5,496.5 620.5,496.0 621.5,495.6 622.5,495.2 623.5,494.8 624.5,494.4 625.5,494.1 626.5,493.7 627.5,493.3 628.5,493.0 629.5,492.6 630.5,492.3 631.5,491.9 632.5,491.6 633.5,491.2 634.5,490.9 635.5,490.6 636.5,490.3 637.5,489.9 638.5,489.6 639.5,489.3 640.5,489.0 641.5,488.7 642.5,488.4 643.5,488.1" stroke="#0000ff" stroke-width="1.1" fill="none" shape-rendering="crispEdges"/><polyline points="44.5,234.5 150.5,234.5 165.5,235.0 180.5,236.0 188.5,237.0 194.5,238.0 199.5,239.0 202.5,240.0 206.5,241.0 209.5,242.0 212.5,243.0 214.5,244.0 216.5,245.0 218.5,246.0 220.5,247.0 222.5,247.4 223.5,247.8 224.5,248.3 225.5,248.8 226.5,249.2 227.5,249.7 228.5,250.2 229.5,250.7 230.5,251.2 231.5,251.7 232.5,252.2 233.5,252.7 234.5,253.2 235.5,253.8 236.5,254.3 237.5,254.8 238.5,255.4 239.5,255.9 240.5,256.4 241.5,257.0 242.5,257.5 243.5,258.1 244.5,258.7 245.5,259.2 246.5,259.8 247.5,260.4 248.5,260.9 249.5,261.5 250.5,262.1 251.5,262.7 252.5,263.3 253.5,263.9 254.5,264.5 255.5,265.1 256.5,265.7 257.5,266.3 258.5,266.9 259.5,267.5 260.5,268.1 261.5,268.7 262.5,269.3 263.5,270.0 264.5,270.6 265.5,271.2 266.5,271.8 267.5,272.5 268.5,273.1 269.5,273.7 270.5,274.3 271.5,275.0 272.5,275.6 273.5,276.3 274.5,276.9 275.5,277.5 276.5,278.2 277.5,278.8 278.5,279.4 279.5,280.1 280.5,280.7 281.5,281.4 282.5,282.0 283.5,282.7 284.5,283.3 285.5,283.9 286.5,284.6 287.5,285.2 288.5,285.9 289.5,286.5 290.5,287.2 291.5,287.8 292.5,288.4 293.5,289.1 294.5,289.7 295.5,290.4 296.5,291.0 297.5,291.6 298.5,292.3 299.5,292.9 300.5,293.6 301.5,294.2 302.5,294.8 303.5,295.5 304.5,296.1 305.5,296.7 306.5,297.3 307.5,298.0 308.5,298.6 309.5,299.2 310.5,299.8 311.5,300.5 312.5,301.1 313.5,301.7 314.5,302.3 315.5,302.9 316.5,303.6 317.5,304.2 318.5,304.8 319.5,305.4 320.5,306.1 321.5,306.7 322.5,307.3 323.5,307.9 324.5,308.6 325.5,309.2 326.5,309.8 327.5,310.5 328.5,311.1 329.5,311.7 330.5,312.4 331.5,313.0 332.5,313.7 333.5,314.3 334.5,314.9 335.5,315.6 336.5,316.3 337.5,316.9 338.5,317.6 339.5,318.2 340.5,318.9 341.5,319.6 342.5,320.2 343.5,320.9 344.5,321.6 345.5,322.3 346.5,323.0 347.5,323.7 348.5,324.4 349.5,325.0 350.5,325.8 351.5,326.5 352.5,327.2 353.5,327.9 354.5,328.6 355.5,329.3 356.5,330.1 357.5,330.8 358.5,331.5 359.5,332.3 360.5,333.0 361.5,333.8 362.5,334.5 363.5,335.3 364.5,336.1 365.5,336.9 366.5,337.6 367.5,338.4 368.5,339.2 369.5,340.0 370.5,340.8 371.5,341.6 372.5,342.4 373.5,343.3 374.5,344.1 375.5,344.9 376.5,345.7 377.5,346.6 378.5,347.4 379.5,348.3 380.5,349.1 381.5,350.0 382.5,350.8 383.5,351.7 384.5,352.6 385.5,353.4 386.5,354.3 387.5,355.2 388.5,356.1 389.5,357.0 390.5,357.8 391.5,358.7 392.5,359.6 393.5,360.5 394.5,361.4 395.5,362.3 396.5,363.2 397.5,364.1 398.5,365.0 399.5,365.9 400.5,366.9 401.5,367.8 402.5,368.7 403.5,369.6 404.5,370.5 405.5,371.4 406.5,372.3 407.5,373.3 408.5,374.2 409.5,375.1 410.5,376.0 411.5,376.9 412.5,377.9 413.5,378.8 414.5,379.7 415.5,380.6 416.5,381.5 417.5,382.5 418.5,383.4 419.5,384.3 420.5,385.2 421.5,386.1 422.5,387.1 423.5,388.0 424.5,388.9 425.5,389.8 426.5,390.7 427.5,391.6 428.5,392.5 429.5,393.4 430.5,394.3 431.5,395.3 432.5,396.2 433.5,397.1 434.5,397.9 435.5,398.8 436.5,399.7 437.5,400.6 438.5,401.5 439.5,402.4 440.5,403.3 441.5,404.1 442.5,405.0 443.5,405.9 444.5,406.7 445.5,407.6 446.5,408.5 447.5,409.3 448.5,410.2 449.5,411.0 450.5,411.9 451.5,412.7 452.5,413.5 453.5,414.4 454.5,415.2 455.5,416.1 456.5,416.9 457.5,417.7 458.5,418.5 459.5,419.4 460.5,420.2 461.5,421.0 462.5,421.9 463.5,422.7 464.5,423.5 465.5,424.3 466.5,425.2 467.5,426.0 468.5,426.8 469.5,427.6 470.5,428.4 471.5,429.3 472.5,430.1 473.5,430.9 474.5,431.7 475.5,432.6 476.5,433.4 477.5,434.2 478.5,435.0 479.5,435.8 480.5,436.7 481.5,437.5 482.5,438.3 483.5,439.1 484.5,439.9 485.5,440.7 486.5,441.5 487.5,442.3 488.5,443.0 489.5,443.8 490.5,444.6 491.5,445.3 492.5,446.1 493.5,446.8 494.5,447.6 495.5,448.3 496.5,449.0 497.5,449.7 498.5,450.4 499.5,451.1 500.5,451.8 501.5,452.5 502.5,453.1 503.5,453.8 504.5,454.4 505.5,455.0 506.5,455.7 507.5,456.3 508.5,456.9 509.5,457.5 510.5,458.1 511.5,458.7 512.5,459.3 513.5,459.9 514.5,460.4 515.5,461.0 516.5,461.6 517.5,462.1 518.5,462.7 519.5,463.2 520.5,463.8 521.5,464.3 522.5,464.8 523.5,465.4 524.5,465.9 525.5,466.4 526.5,466.9 527.5,467.4 528.5,467.9 529.5,468.5 530.5,469.0 531.5,469.5 532.5,470.0 533.5,470.5 534.5,471.0 535.5,471.5 536.5,472.0 537.5,472.4 538.5,472.9 539.5,473.4 540.5,473.9 541.5,474.4 542.5,474.9 543.5,475.4 544.5,475.9 545.5,476.3 546.5,476.8 547.5,477.3 548.5,477.8 549.5,478.3 550.5,478.8 551.5,479.3 552.5,479.8 553.5,480.2 554.5,480.7 555.5,481.2 556.5,481.7 557.5,482.2 558.5,482.7 559.5,483.3 560.5,483.8 561.5,484.3 562.5,484.9 563.5,485.4 564.5,486.0 565.5,486.5 566.5,487.1 567.5,487.7 568.5,488.3 569.5,488.9 570.5,489.5 571.5,490.2 572.5,490.8 573.5,491.5 574.5,492.2 575.5,492.9 576.5,493.6 577.5,494.3 578.5,495.1 579.5,495.9 580.5,496.6 581.5,497.4 582.5,498.2 583.5,499.0 584.5,499.8 585.5,500.5 586.5,501.3 587.5,502.0 588.5,502.8 589.5,503.6 590.5,504.6 591.5,505.6 593.0,507.8 594.0,508.5 598.0,508.5 598.5,508.4 599.5,507.7 600.5,507.0 601.5,506.4 602.5,505.7 603.5,505.1 604.5,504.5 605.5,503.9 606.5,503.4 607.5,502.8 608.5,502.2 609.5,501.7 610.5,501.2 611.5,500.6 612.5,500.1 613.5,499.6 614.5,499.2 615.5,498.7 616.5,498.2 617.5,497.8 618.5,497.3 619.5,496.9 620.5,496.5 621.5,496.0 622.5,495.6 623.5,495.2 624.5,494.8 625.5,494.4 626.5,494.1 627.5,493.7 628.5,493.3 629.5,493.0 630.5,492.6 631.5,492.3 632.5,491.9 633.5,491.6 634.5,491.2 635.5,490.9 636.5,490.6 637.5,490.3 638.5,489.9 639.5,489.6 640.5,489.3 641.5,489.0 642.5,488.7 643.5,488.4 644.5,488.1" stroke="#0000ff" stroke-width="1.1" fill="none" shape-rendering="crispEdges"/><polyline points="43.5,235.5 149.5,235.5 164.5,236.0 179.5,237.0 187.5,238.0 193.5,239.0 198.5,240.0 201.5,241.0 205.5,242.0 208.5,243.0 211.5,244.0 213.5,245.0 215.5,246.0 217.5,247.0 219.5,248.0 221.5,248.4 222.5,248.8 223.5,249.3 224.5,249.8 225.5,250.2 226.5,250.7 227.5,251.2 228.5,251.7 229.5,252.2 230.5,252.7 231.5,253.2 232.5,253.7 233.5,254.2 234.5,254.8 235.5,255.3 236.5,255.8 237.5,256.4 238.5,256.9 239.5,257.4 240.5,258.0 241.5,258.5 242.5,259.1 243.5,259.7 244.5,260.2 245.5,260.8 246.5,261.4 247.5,261.9 248.5,262.5 249.5,263.1 250.5,263.7 251.5,264.3 252.5,264.9 253.5,265.5 254.5,266.1 255.5,266.7 256.5,267.3 257.5,267.9 258.5,268.5 259.5,269.1 260.5,269.7 261.5,270.3 262.5,271.0 263.5,271.6 264.5,272.2 265.5,272.8 266.5,273.5 267.5,274.1 268.5,274.7 269.5,275.3 270.5,276.0 271.5,276.6 272.5,277.3 273.5,277.9 274.5,278.5 275.5,279.2 276.5,279.8 277.5,280.4 278.5,281.1 279.5,281.7 280.5,282.4 281.5,283.0 282.5,283.7 283.5,284.3 284.5,284.9 285.5,285.6 286.5,286.2 287.5,286.9 288.5,287.5 289.5,288.2 290.5,288.8 291.5,289.4 292.5,290.1 293.5,290.7 294.5,291.4 295.5,292.0 296.5,292.6 297.5,293.3 298.5,293.9 299.5,294.6 300.5,295.2 301.5,295.8 302.5,296.5 303.5,297.1 304.5,297.7 305.5,298.3 306.5,299.0 307.5,299.6 308.5,300.2 309.5,300.8 310.5,301.5 311.5,302.1 312.5,302.7 313.5,303.3 314.5,303.9 315.5,304.6 316.5,305.2 317.5,305.8 318.5,306.4 319.5,307.1 320.5,307.7 321.5,308.3 322.5,308.9 323.5,309.6 324.5,310.2 325.5,310.8 326.5,311.5 327.5,312.1 328.5,312.7 329.5,313.4 330.5,314.0 331.5,314.7 332.5,315.3 333.5,315.9 334.5,316.6 335.5,317.3 336.5,317.9 337.5,318.6 338.5,319.2 339.5,319.9 340.5,320.6 341.5,321.2 342.5,321.9 343.5,322.6 344.5,323.3 345.5,324.0 346.5,324.7 347.5,325.4 348.5,326.0 349.5,326.8 350.5,327.5 351.5,328.2 352.5,328.9 353.5,329.6 354.5,330.3 355.5,331.1 356.5,331.8 357.5,332.5 358.5,333.3 359.5,334.0 360.5,334.8 361.5,335.5 362.5,336.3 363.5,337.1 364.5,337.9 365.5,338.6 366.5,339.4 367.5,340.2 368.5,341.0 369.5,341.8 370.5,342.6 371.5,343.4 372.5,344.3 373.5,345.1 374.5,345.9 375.5,346.7 376.5,347.6 377.5,348.4 378.5,349.3 379.5,350.1 380.5,351.0 381.5,351.8 382.5,352.7 383.5,353.6 384.5,354.4 385.5,355.3 386.5,356.2 387.5,357.1 388.5,358.0 389.5,358.8 390.5,359.7 391.5,360.6 392.5,361.5 393.5,362.4 394.5,363.3 395.5,364.2 396.5,365.1 397.5,366.0 398.5,366.9 399.5,367.9 400.5,368.8 401.5,369.7 402.5,370.6 403.5,371.5 404.5,372.4 405.5,373.3 406.5,374.3 407.5,375.2 408.5,376.1 409.5,377.0 410.5,377.9 411.5,378.9 412.5,379.8 413.5,380.7 414.5,381.6 415.5,382.5 416.5,383.5 417.5,384.4 418.5,385.3 419.5,386.2 420.5,387.1 421.5,388.1 422.5,389.0 423.5,389.9 424.5,390.8 425.5,391.7 426.5,392.6 427.5,393.5 428.5,394.4 429.5,395.3 430.5,396.3 431.5,397.2 432.5,398.1 433.5,398.9 434.5,399.8 435.5,400.7 436.5,401.6 437.5,402.5 438.5,403.4 439.5,404.3 440.5,405.1 441.5,406.0 442.5,406.9 443.5,407.7 444.5,408.6 445.5,409.5 446.5,410.3 447.5,411.2 448.5,412.0 449.5,412.9 450.5,413.7 451.5,414.5 452.5,415.4 453.5,416.2 454.5,417.1 455.5,417.9 456.5,418.7 457.5,419.5 458.5,420.4 459.5,421.2 460.5,422.0 461.5,422.9 462.5,423.7 463.5,424.5 464.5,425.3 465.5,426.2 466.5,427.0 467.5,427.8 468.5,428.6 469.5,429.4 470.5,430.3 471.5,431.1 472.5,431.9 473.5,432.7 474.5,433.6 475.5,434.4 476.5,435.2 477.5,436.0 478.5,436.8 479.5,437.7 480.5,438.5 481.5,439.3 482.5,440.1 483.5,440.9 484.5,441.7 485.5,442.5 486.5,443.3 487.5,444.0 488.5,444.8 489.5,445.6 490.5,446.3 491.5,447.1 492.5,447.8 493.5,448.6 494.5,449.3 495.5,450.0 496.5,450.7 497.5,451.4 498.5,452.1 499.5,452.8 500.5,453.5 501.5,454.1 502.5,454.8 503.5,455.4 504.5,456.0 505.5,456.7 506.5,457.3 507.5,457.9 508.5,458.5 509.5,459.1 510.5,459.7 511.5,460.3 512.5,460.9 513.5,461.4 514.5,462.0 515.5,462.6 516.5,463.1 517.5,463.7 518.5,464.2 519.5,464.8 520.5,465.3 521.5,465.8 522.5,466.4 523.5,466.9 524.5,467.4 525.5,467.9 526.5,468.4 527.5,468.9 528.5,469.5 529.5,470.0 530.5,470.5 531.5,471.0 532.5,471.5 533.5,472.0 534.5,472.5 535.5,473.0 536.5,473.4 537.5,473.9 538.5,474.4 539.5,474.9 540.5,475.4 541.5,475.9 542.5,476.4 543.5,476.9 544.5,477.3 545.5,477.8 546.5,478.3 547.5,478.8 548.5,479.3 549.5,479.8 550.5,480.3 551.5,480.8 552.5,481.2 553.5,481.7 554.5,482.2 555.5,482.7 556.5,483.2 557.5,483.7 558.5,484.3 559.5,484.8 560.5,485.3 561.5,485.9 562.5,486.4 563.5,487.0 564.5,487.5 565.5,488.1 566.5,488.7 567.5,489.3 568.5,489.9 569.5,490.5 570.5,491.2 571.5,491.8 572.5,492.5 573.5,493.2 574.5,493.9 575.5,494.6 576.5,495.3 577.5,496.1 578.5,496.9 579.5,497.6 580.5,498.4 581.5,499.2 582.5,500.0 583.5,500.8 584.5,501.5 585.5,502.3 586.5,503.0 587.5,503.8 588.5,504.6 589.5,505.6 590.5,506.6 592.0,508.8 593.0,509.5 597.0,509.5 597.5,509.4 598.5,508.7 599.5,508.0 600.5,507.4 601.5,506.7 602.5,506.1 603.5,505.5 604.5,504.9 605.5,504.4 606.5,503.8 607.5,503.2 608.5,502.7 609.5,502.2 610.5,501.6 611.5,501.1 612.5,500.6 613.5,500.2 614.5,499.7 615.5,499.2 616.5,498.8 617.5,498.3 618.5,497.9 619.5,497.5 620.5,497.0 621.5,496.6 622.5,496.2 623.5,495.8 624.5,495.4 625.5,495.1 626.5,494.7 627.5,494.3 628.5,494.0 629.5,493.6 630.5,493.3 631.5,492.9 632.5,492.6 633.5,492.2 634.5,491.9 635.5,491.6 636.5,491.3 637.5,490.9 638.5,490.6 639.5,490.3 640.5,490.0 641.5,489.7 642.5,489.4 643.5,489.1" stroke="#0000ff" stroke-width="1.1" fill="none" shape-rendering="crispEdges"/><polyline points="44.5,235.5 150.5,235.5 165.5,236.0 180.5,237.0 188.5,238.0 194.5,239.0 199.5,240.0 202.5,241.0 206.5,242.0 209.5,243.0 212.5,244.0 214.5,245.0 216.5,246.0 218.5,247.0 220.5,248.0 222.5,248.4 223.5,248.8 224.5,249.3 225.5,249.8 226.5,250.2 227.5,250.7 228.5,251.2 229.5,251.7 230.5,252.2 231.5,252.7 232.5,253.2 233.5,253.7 234.5,254.2 235.5,254.8 236.5,255.3 237.5,255.8 238.5,256.4 239.5,256.9 240.5,257.4 241.5,258.0 242.5,258.5 243.5,259.1 244.5,259.7 245.5,260.2 246.5,260.8 247.5,261.4 248.5,261.9 249.5,262.5 250.5,263.1 251.5,263.7 252.5,264.3 253.5,264.9 254.5,265.5 255.5,266.1 256.5,266.7 257.5,267.3 258.5,267.9 259.5,268.5 260.5,269.1 261.5,269.7 262.5,270.3 263.5,271.0 264.5,271.6 265.5,272.2 266.5,272.8 267.5,273.5 268.5,274.1 269.5,274.7 270.5,275.3 271.5,276.0 272.5,276.6 273.5,277.3 274.5,277.9 275.5,278.5 276.5,279.2 277.5,279.8 278.5,280.4 279.5,281.1 280.5,281.7 281.5,282.4 282.5,283.0 283.5,283.7 284.5,284.3 285.5,284.9 286.5,285.6 287.5,286.2 288.5,286.9 289.5,287.5 290.5,288.2 291.5,288.8 292.5,289.4 293.5,290.1 294.5,290.7 295.5,291.4 296.5,292.0 297.5,292.6 298.5,293.3 299.5,293.9 300.5,294.6 301.5,295.2 302.5,295.8 303.5,296.5 304.5,297.1 305.5,297.7 306.5,298.3 307.5,299.0 308.5,299.6 309.5,300.2 310.5,300.8 311.5,301.5 312.5,302.1 313.5,302.7 314.5,303.3 315.5,303.9 316.5,304.6 317.5,305.2 318.5,305.8 319.5,306.4 320.5,307.1 321.5,307.7 322.5,308.3 323.5,308.9 324.5,309.6 325.5,310.2 326.5,310.8 327.5,311.5 328.5,312.1 329.5,312.7 330.5,313.4 331.5,314.0 332.5,314.7 333.5,315.3 334.5,315.9 335.5,316.6 336.5,317.3 337.5,317.9 338.5,318.6 339.5,319.2 340.5,319.9 341.5,320.6 342.5,321.2 343.5,321.9 344.5,322.6 345.5,323.3 346.5,324.0 347.5,324.7 348.5,325.4 349.5,326.0 350.5,326.8 351.5,327.5 352.5,328.2 353.5,328.9 354.5,329.6 355.5,330.3 356.5,331.1 357.5,331.8 358.5,332.5 359.5,333.3 360.5,334.0 361.5,334.8 362.5,335.5 363.5,336.3 364.5,337.1 365.5,337.9 366.5,338.6 367.5,339.4 368.5,340.2 369.5,341.0 370.5,341.8 371.5,342.6 372.5,343.4 373.5,344.3 374.5,345.1 375.5,345.9 376.5,346.7 377.5,347.6 378.5,348.4 379.5,349.3 380.5,350.1 381.5,351.0 382.5,351.8 383.5,352.7 384.5,353.6 385.5,354.4 386.5,355.3 387.5,356.2 388.5,357.1 389.5,358.0 390.5,358.8 391.5,359.7 392.5,360.6 393.5,361.5 394.5,362.4 395.5,363.3 396.5,364.2 397.5,365.1 398.5,366.0 399.5,366.9 400.5,367.9 401.5,368.8 402.5,369.7 403.5,370.6 404.5,371.5 405.5,372.4 406.5,373.3 407.5,374.3 408.5,375.2 409.5,376.1 410.5,377.0 411.5,377.9 412.5,378.9 413.5,379.8 414.5,380.7 415.5,381.6 416.5,382.5 417.5,383.5 418.5,384.4 419.5,385.3 420.5,386.2 421.5,387.1 422.5,388.1 423.5,389.0 424.5,389.9 425.5,390.8 426.5,391.7 427.5,392.6 428.5,393.5 429.5,394.4 430.5,395.3 431.5,396.3 432.5,397.2 433.5,398.1 434.5,398.9 435.5,399.8 436.5,400.7 437.5,401.6 438.5,402.5 439.5,403.4 440.5,404.3 441.5,405.1 442.5,406.0 443.5,406.9 444.5,407.7 445.5,408.6 446.5,409.5 447.5,410.3 448.5,411.2 449.5,412.0 450.5,412.9 451.5,413.7 452.5,414.5 453.5,415.4 454.5,416.2 455.5,417.1 456.5,417.9 457.5,418.7 458.5,419.5 459.5,420.4 460.5,421.2 461.5,422.0 462.5,422.9 463.5,423.7 464.5,424.5 465.5,425.3 466.5,426.2 467.5,427.0 468.5,427.8 469.5,428.6 470.5,429.4 471.5,430.3 472.5,431.1 473.5,431.9 474.5,432.7 475.5,433.6 476.5,434.4 477.5,435.2 478.5,436.0 479.5,436.8 480.5,437.7 481.5,438.5 482.5,439.3 483.5,440.1 484.5,440.9 485.5,441.7 486.5,442.5 487.5,443.3 488.5,444.0 489.5,444.8 490.5,445.6 491.5,446.3 492.5,447.1 493.5,447.8 494.5,448.6 495.5,449.3 496.5,450.0 497.5,450.7 498.5,451.4 499.5,452.1 500.5,452.8 501.5,453.5 502.5,454.1 503.5,454.8 504.5,455.4 505.5,456.0 506.5,456.7 507.5,457.3 508.5,457.9 509.5,458.5 510.5,459.1 511.5,459.7 512.5,460.3 513.5,460.9 514.5,461.4 515.5,462.0 516.5,462.6 517.5,463.1 518.5,463.7 519.5,464.2 520.5,464.8 521.5,465.3 522.5,465.8 523.5,466.4 524.5,466.9 525.5,467.4 526.5,467.9 527.5,468.4 528.5,468.9 529.5,469.5 530.5,470.0 531.5,470.5 532.5,471.0 533.5,471.5 534.5,472.0 535.5,472.5 536.5,473.0 537.5,473.4 538.5,473.9 539.5,474.4 540.5,474.9 541.5,475.4 542.5,475.9 543.5,476.4 544.5,476.9 545.5,477.3 546.5,477.8 547.5,478.3 548.5,478.8 549.5,479.3 550.5,479.8 551.5,480.3 552.5,480.8 553.5,481.2 554.5,481.7 555.5,482.2 556.5,482.7 557.5,483.2 558.5,483.7 559.5,484.3 560.5,484.8 561.5,485.3 562.5,485.9 563.5,486.4 564.5,487.0 565.5,487.5 566.5,488.1 567.5,488.7 568.5,489.3 569.5,489.9 570.5,490.5 571.5,491.2 572.5,491.8 573.5,492.5 574.5,493.2 575.5,493.9 576.5,494.6 577.5,495.3 578.5,496.1 579.5,496.9 580.5,497.6 581.5,498.4 582.5,499.2 583.5,500.0 584.5,500.8 585.5,501.5 586.5,502.3 587.5,503.0 588.5,503.8 589.5,504.6 590.5,505.6 591.5,506.6 593.0,508.8 594.0,509.5 598.0,509.5 598.5,509.4 599.5,508.7 600.5,508.0 601.5,507.4 602.5,506.7 603.5,506.1 604.5,505.5 605.5,504.9 606.5,504.4 607.5,503.8 608.5,503.2 609.5,502.7 610.5,502.2 611.5,501.6 612.5,501.1 613.5,500.6 614.5,500.2 615.5,499.7 616.5,499.2 617.5,498.8 618.5,498.3 619.5,497.9 620.5,497.5 621.5,497.0 622.5,496.6 623.5,496.2 624.5,495.8 625.5,495.4 626.5,495.1 627.5,494.7 628.5,494.3 629.5,494.0 630.5,493.6 631.5,493.3 632.5,492.9 633.5,492.6 634.5,492.2 635.5,491.9 636.5,491.6 637.5,491.3 638.5,490.9 639.5,490.6 640.5,490.3 641.5,490.0 642.5,489.7 643.5,489.4 644.5,489.1" stroke="#0000ff" stroke-width="1.1" fill="none" shape-rendering="crispEdges"/><path d="M366 335h3v1h2v2h1v3h-1v2h-2v1h-3v-1h-2v-2h-1v-3h1v-2h2z" fill="#000" shape-rendering="crispEdges"/><rect x="365.5" y="352.5" width="53" height="12" fill="#ffff00" stroke="#000" stroke-width="1" shape-rendering="crispEdges"/><text transform="translate(0 362) scale(1 0.93)" x="367" y="0" font-family="Liberation Sans" font-size="10" fill="#000" stroke="#000" stroke-width="0.25" textLength="50.5" lengthAdjust="spacingAndGlyphs">20k,116.57</text><text transform="translate(0 124) scale(1 0.95)" x="41.5" y="0" text-anchor="end" font-family="Liberation Sans" font-size="10.67" fill="#0000ff">300.00</text><text transform="translate(0 214) scale(1 0.95)" x="41.5" y="0" text-anchor="end" font-family="Liberation Sans" font-size="10.67" fill="#0000ff">225.00</text><text transform="translate(0 303) scale(1 0.95)" x="41.5" y="0" text-anchor="end" font-family="Liberation Sans" font-size="10.67" fill="#0000ff">150.00</text><text transform="translate(0 393) scale(1 0.95)" x="41.5" y="0" text-anchor="end" font-family="Liberation Sans" font-size="10.67" fill="#0000ff">75.00</text><text transform="translate(0 482) scale(1 0.95)" x="41.5" y="0" text-anchor="end" font-family="Liberation Sans" font-size="10.67" fill="#0000ff">0.00</text><text transform="translate(0 572) scale(1 0.95)" x="41.5" y="0" text-anchor="end" font-family="Liberation Sans" font-size="10.67" fill="#0000ff">-75.00</text><text transform="translate(0 579) scale(1 0.95)" x="44" y="0" text-anchor="start" font-family="Liberation Sans" font-size="10.67" fill="#0000ff">1</text><text transform="translate(0 579) scale(1 0.95)" x="119.5" y="0" text-anchor="middle" font-family="Liberation Sans" font-size="10.67" fill="#0000ff">10</text><text transform="translate(0 579) scale(1 0.95)" x="194.5" y="0" text-anchor="middle" font-family="Liberation Sans" font-size="10.67" fill="#0000ff">100</text><text transform="translate(0 579) scale(1 0.95)" x="269.5" y="0" text-anchor="middle" font-family="Liberation Sans" font-size="10.67" fill="#0000ff">1K</text><text transform="translate(0 579) scale(1 0.95)" x="344.5" y="0" text-anchor="middle" font-family="Liberation Sans" font-size="10.67" fill="#0000ff">10K</text><text transform="translate(0 579) scale(1 0.95)" x="419.5" y="0" text-anchor="middle" font-family="Liberation Sans" font-size="10.67" fill="#0000ff">100K</text><text transform="translate(0 579) scale(1 0.95)" x="494.5" y="0" text-anchor="middle" font-family="Liberation Sans" font-size="10.67" fill="#0000ff">1M</text><text transform="translate(0 579) scale(1 0.95)" x="569.5" y="0" text-anchor="middle" font-family="Liberation Sans" font-size="10.67" fill="#0000ff">10M</text><text transform="translate(0 579) scale(1 0.95)" x="644.5" y="0" text-anchor="middle" font-family="Liberation Sans" font-size="10.67" fill="#0000ff">100M</text><text transform="translate(0 117) scale(1 0.95)" x="344" y="0" text-anchor="middle" font-family="Liberation Sans" font-size="10.67" fill="#0000ff">test_nfb_cor 074 RIAA.cir TEST</text><text transform="translate(0 592) scale(1 0.95)" x="44" y="0" text-anchor="start" font-family="Liberation Sans" font-size="10.67" fill="#0000ff" textLength="67" lengthAdjust="spacingAndGlyphs">db(v(out)/v(in))</text><text transform="translate(0 605) scale(1 0.95)" x="278.5" y="0" text-anchor="start" font-family="Liberation Sans" font-size="10.67" fill="#0000ff" textLength="26.6" lengthAdjust="spacingAndGlyphs">F (Hz)</text><rect x="44" y="593" width="67" height="1" fill="#0000ff"/></svg></body></html>
